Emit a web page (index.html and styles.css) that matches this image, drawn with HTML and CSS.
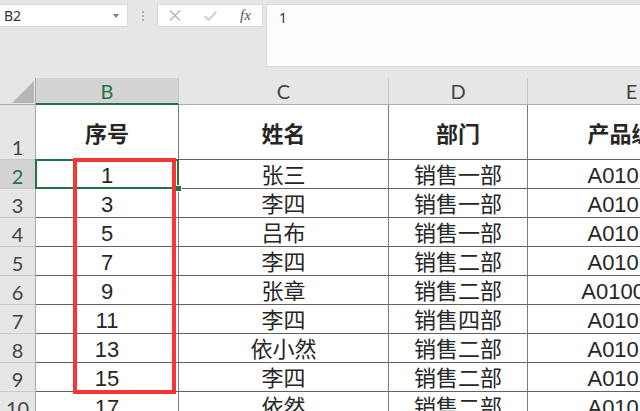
FILE: index.html
```html
<!DOCTYPE html>
<html lang="zh">
<head>
<meta charset="utf-8">
<title>Sheet</title>
<link rel="stylesheet" href="styles.css">
</head>
<body>
<div class="top">
  <div class="namebox"><span>B2</span><svg class="arrow" width="6" height="4" viewBox="0 0 6 4"><polygon points="0,0 6,0 3,4" fill="#7a7a7a"/></svg></div>
  <div class="grip"><i></i><i></i><i></i></div>
  <div class="fxbtns">
    <svg width="12" height="11" viewBox="0 0 12 11"><path d="M1 0.5 L11 10.5 M11 0.5 L1 10.5" stroke="#b4b4b4" stroke-width="1.3" fill="none"/></svg>
    <svg width="13" height="10" viewBox="0 0 13 10"><path d="M0.8 5.2 L4.6 9 L12.3 0.8" stroke="#c4c4c4" stroke-width="1.6" fill="none"/></svg>
    <span class="fx">fx</span>
  </div>
  <div class="formula">1</div>
</div>
<div class="sheet">
  <div class="grid">
    <div class="corner"><svg width="22" height="22" viewBox="0 0 22 22"><polygon points="22,0 22,22 0,22" fill="#b6b6b6"/></svg></div>
    <div class="ch sel">B</div>
    <div class="ch">C</div>
    <div class="ch">D</div>
    <div class="ch">E</div>

    <div class="rh">1</div>
    <div class="c hd">序号</div>
    <div class="c hd">姓名</div>
    <div class="c hd">部门</div>
    <div class="c hd">产品编号</div>

    <div class="rh sel">2</div>
    <div class="c b2">1</div>
    <div class="c">张三</div>
    <div class="c">销售一部</div>
    <div class="c">A010101</div>

    <div class="rh">3</div>
    <div class="c">3</div>
    <div class="c">李四</div>
    <div class="c">销售一部</div>
    <div class="c">A010102</div>

    <div class="rh">4</div>
    <div class="c">5</div>
    <div class="c">吕布</div>
    <div class="c">销售一部</div>
    <div class="c">A010103</div>

    <div class="rh">5</div>
    <div class="c">7</div>
    <div class="c">李四</div>
    <div class="c">销售二部</div>
    <div class="c">A010104</div>

    <div class="rh">6</div>
    <div class="c">9</div>
    <div class="c">张章</div>
    <div class="c">销售二部</div>
    <div class="c">A0100105</div>

    <div class="rh">7</div>
    <div class="c">11</div>
    <div class="c">李四</div>
    <div class="c">销售四部</div>
    <div class="c">A010106</div>

    <div class="rh">8</div>
    <div class="c">13</div>
    <div class="c">依小然</div>
    <div class="c">销售二部</div>
    <div class="c">A010107</div>

    <div class="rh">9</div>
    <div class="c">15</div>
    <div class="c">李四</div>
    <div class="c">销售二部</div>
    <div class="c">A010108</div>

    <div class="rh">10</div>
    <div class="c">17</div>
    <div class="c">依然</div>
    <div class="c">销售二部</div>
    <div class="c">A010109</div>
  </div>
  <div class="redbox"></div>
</div>
</body>
</html>
```
FILE: styles.css
```css
html, body {
  margin: 0;
  padding: 0;
}
body {
  width: 640px;
  height: 411px;
  overflow: hidden;
  background: #e6e6e6;
  font-family: "Liberation Sans", "Noto Sans CJK SC", sans-serif;
  color: #222;
}

/* ---------- formula bar ---------- */
.top {
  display: flex;
  align-items: flex-start;
  height: 78px;
  padding-top: 4px;
  box-sizing: border-box;
}
.namebox {
  width: 128px;
  height: 23px;
  box-sizing: border-box;
  background: #fff;
  border: 1px solid #d8d8d8;
  border-left: none;
  display: flex;
  align-items: center;
  justify-content: space-between;
  padding: 0 8px 0 4px;
  font-size: 14px;
  color: #333;
  font-family: "Noto Sans", "Liberation Sans", sans-serif;
}
.arrow {
  display: block;
}
.grip {
  width: 29px;
  height: 23px;
  display: flex;
  flex-direction: column;
  align-items: center;
  justify-content: center;
  gap: 2px;
}
.grip i {
  display: block;
  width: 2px;
  height: 2px;
  background: #ababab;
}
.fxbtns {
  width: 106px;
  height: 23px;
  box-sizing: border-box;
  background: #fff;
  border: 1px solid #d8d8d8;
  display: flex;
  align-items: center;
  padding-left: 11px;
  gap: 23px;
}
.fxbtns svg {
  display: block;
}
.fx {
  font-family: "Liberation Serif", serif;
  font-style: italic;
  font-size: 15px;
  color: #555;
  line-height: 1;
}
.formula {
  flex: 1;
  margin-left: 3px;
  height: 63px;
  box-sizing: border-box;
  background: #fdfdfd;
  border: 1px solid #d8d8d8;
  border-right: none;
  padding: 3px 12px;
  font-size: 14px;
  color: #333;
  font-family: "Noto Sans", "Liberation Sans", sans-serif;
}

/* ---------- sheet ---------- */
.sheet {
  position: relative;
  height: 333px;
  overflow: hidden;
}
.grid {
  display: grid;
  grid-template-columns: 36px 143px 210px 139px 208px;
  grid-template-rows: 27px 55px repeat(9, 29px);
  width: 736px;
}
.grid > div {
  box-sizing: border-box;
  display: flex;
  justify-content: center;
  overflow: hidden;
  white-space: nowrap;
}
.corner {
  border-right: 1px solid #ababab;
  border-bottom: 1px solid #ababab;
  align-items: flex-end;
  justify-content: flex-end !important;
  padding: 0 1px 1px 0;
}
.corner svg {
  display: block;
}
.ch {
  align-items: center;
  background: #e6e6e6;
  border-right: 1px solid #c9c9c9;
  border-bottom: 1px solid #ababab;
  font-family: "Lato", "Liberation Sans", sans-serif;
  font-size: 20px;
  color: #444;
}
.ch.sel {
  background: #d3d3d3;
  border-bottom: 2px solid #217346;
  color: #217346;
}
.rh {
  align-items: flex-end;
  background: #e6e6e6;
  border-right: 1px solid #ababab;
  border-bottom: 1px solid #c9c9c9;
  font-family: "Lato", "Liberation Sans", sans-serif;
  font-size: 20px;
  line-height: 24px;
  color: #444;
}
.rh.sel {
  background: #d3d3d3;
  color: #217346;
}
.c {
  align-items: flex-end;
  background: #fff;
  border-right: 1px solid #7d7d7d;
  border-bottom: 1px solid #626262;
  font-size: 22px;
  line-height: 25px;
  color: #262626;
}
.c.hd {
  align-items: center;
  font-weight: 700;
  padding-top: 4px;
}
.b2 {
  position: relative;
  overflow: visible !important;
}
.b2::after {
  content: "";
  position: absolute;
  left: -1px;
  top: -1px;
  right: -1px;
  bottom: -1px;
  border: 2px solid #217346;
}
.b2::before {
  content: "";
  position: absolute;
  right: -4px;
  bottom: -4px;
  width: 5px;
  height: 5px;
  background: #217346;
  border: 1px solid #fff;
  z-index: 2;
}
.redbox {
  position: absolute;
  left: 73px;
  top: 80px;
  width: 103px;
  height: 236px;
  box-sizing: border-box;
  border: 4px solid #f93636;
  z-index: 3;
}
```
